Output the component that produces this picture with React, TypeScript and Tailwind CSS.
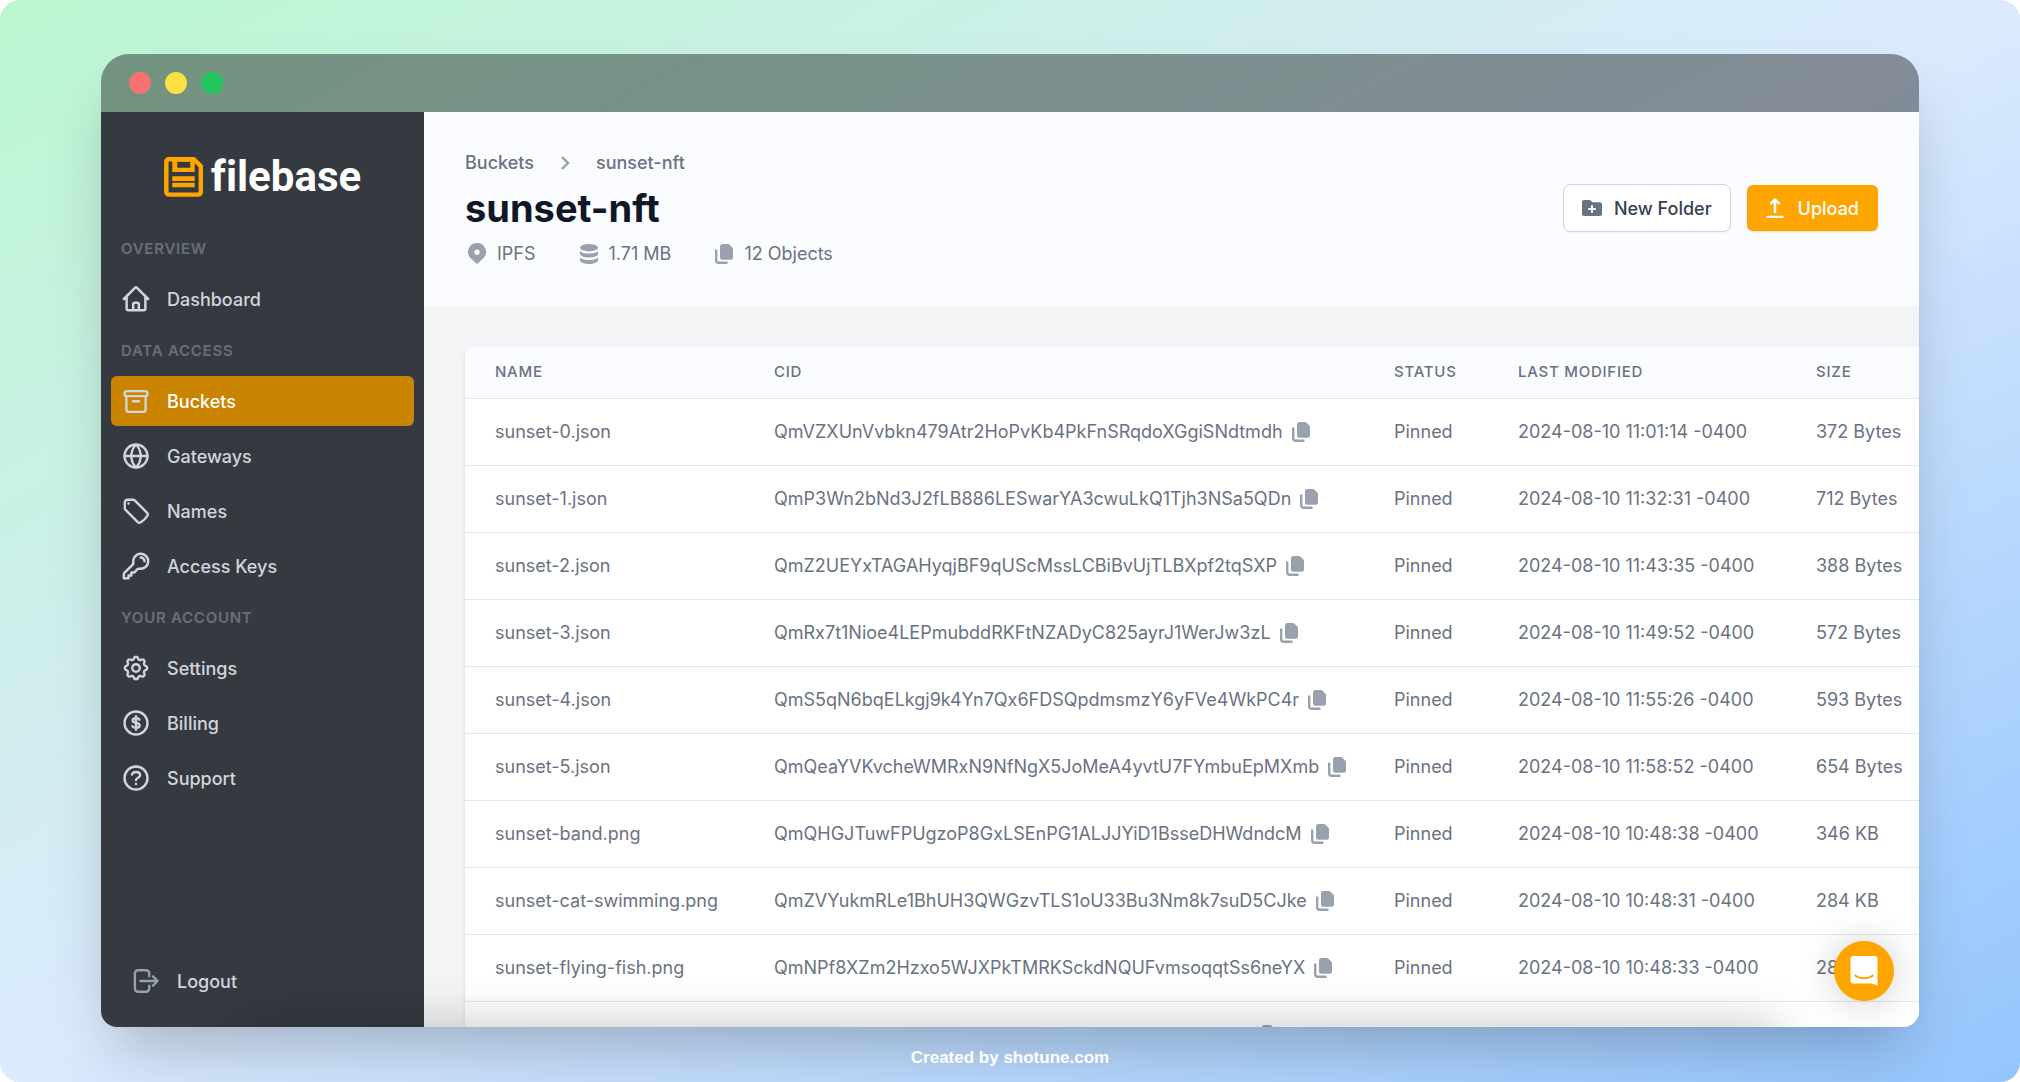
import React from 'react';
import { HiOutlineHome, HiOutlineKey, HiOutlineTag } from 'react-icons/hi2';
import { TbSettings } from 'react-icons/tb';

type IconProps = { className?: string };

const Line: React.FC<IconProps & { children: React.ReactNode }> = ({ className, children }) => (
  <svg
    viewBox="0 0 24 24"
    fill="none"
    stroke="currentColor"
    strokeWidth={1.9}
    strokeLinecap="round"
    strokeLinejoin="round"
    className={className}
    aria-hidden="true"
  >
    {children}
  </svg>
);

const HomeIcon: React.FC<IconProps> = (p) => <HiOutlineHome strokeWidth={2} {...p} />;
const TagIcon: React.FC<IconProps> = (p) => <HiOutlineTag strokeWidth={1.9} {...p} />;
const KeyIcon: React.FC<IconProps> = (p) => <HiOutlineKey strokeWidth={2} {...p} />;
const SettingsIcon: React.FC<IconProps> = (p) => <TbSettings strokeWidth={1.9} {...p} />;

const BucketIcon: React.FC<IconProps> = (p) => (
  <Line {...p}>
    <rect x="2.9" y="4.1" width="18.2" height="4" rx="1.6" />
    <path d="M4.3 8.1v10.4a2.2 2.2 0 0 0 2.2 2.2h11a2.2 2.2 0 0 0 2.2-2.2V8.1M9.6 12.2h4.8" />
  </Line>
);

const GlobeIcon: React.FC<IconProps> = (p) => (
  <Line {...p}>
    <circle cx="12" cy="12" r="9.2" />
    <path d="M2.8 12h18.4M12 2.8c-2.6 2.6-3.7 5.8-3.7 9.2s1.1 6.6 3.7 9.2c2.6-2.6 3.7-5.8 3.7-9.2S14.6 5.4 12 2.8" />
  </Line>
);

const BillingIcon: React.FC<IconProps> = (p) => (
  <Line {...p}>
    <circle cx="12" cy="12" r="9.2" />
    <path d="M12 6.6v10.8M14.7 9.3c-.4-.8-1.4-1.2-2.7-1.2-1.6 0-2.7.7-2.7 1.9 0 2.900 5.600 1.100 5.600 4 0 1.200-1.200 1.900-2.900 1.900-1.500 0-2.500-.5-2.900-1.400" />
  </Line>
);

const SupportIcon: React.FC<IconProps> = (p) => (
  <Line {...p}>
    <circle cx="12" cy="12" r="9.2" />
    <path d="M8.8 9.2c.4-1.3 1.6-2 3.2-2 1.9 0 3.3 1 3.3 2.5 0 2-2.9 2.2-3.3 3.9M12 16.7v.1" />
  </Line>
);

const LogoutIcon: React.FC<IconProps> = (p) => (
  <Line {...p}>
    <path d="M14.600 8.200V6a2.600 2.600 0 0 0-2.600-2.600H5.700A2.600 2.600 0 0 0 3.100 6v12a2.600 2.600 0 0 0 2.600 2.600H12a2.600 2.600 0 0 0 2.600-2.600v-2.200M7.500 12H21M17.600 8.200 21.200 12l-3.600 3.800" />
  </Line>
);

const CopyIcon: React.FC<IconProps> = ({ className }) => (
  <svg viewBox="0 0 18 20" className={className} aria-hidden="true">
    <path d="M7.5 0h5.300q1 0 1.700.7l2.800 2.800q.7.7.7 1.700v8a2.500 2.500 0 0 1-2.500 2.500h-8A2.500 2.500 0 0 1 5 13.200V2.500A2.500 2.500 0 0 1 7.500 0Z" fill="currentColor" />
    <path d="M1.200 5.500v10.800a2.500 2.500 0 0 0 2.500 2.500h8.800" fill="none" stroke="currentColor" strokeWidth="2.4" />
  </svg>
);

const PinIcon: React.FC<IconProps> = ({ className }) => (
  <svg viewBox="0 0 18 21" fill="currentColor" className={className} aria-hidden="true">
    <path fillRule="evenodd" d="M9 0a9 9 0 0 1 6.600 15.100L9 21l-6.600-5.900A9 9 0 0 1 9 0Zm0 6.600a2.600 2.600 0 1 0 0 5.200 2.600 2.600 0 0 0 0-5.200Z" />
  </svg>
);

const DatabaseIcon: React.FC<IconProps> = ({ className }) => (
  <svg viewBox="0 0 18 20" fill="currentColor" className={className} aria-hidden="true">
    <ellipse cx="9" cy="3.7" rx="9" ry="3.7" />
    <path d="M0 7c2 1.8 5.200 2.600 9 2.600S16 8.800 18 7v2.800c0 2.100-4 3.700-9 3.700s-9-1.600-9-3.700Z" />
    <path d="M0 13.400C2 15.200 5.200 16 9 16s7-.8 9-2.600v2.900c0 2.100-4 3.700-9 3.700s-9-1.600-9-3.700Z" />
  </svg>
);

const FolderPlusIcon: React.FC<IconProps> = ({ className }) => (
  <svg viewBox="0 0 20 16" fill="currentColor" className={className} aria-hidden="true">
    <path fillRule="evenodd" d="M2 0h6l2.500 2.200H18a2 2 0 0 1 2 2V14a2 2 0 0 1-2 2H2a2 2 0 0 1-2-2V2a2 2 0 0 1 2-2Zm7 5.200V8H6.200v2H9v2.800h2V10h2.800V8H11V5.200Z" />
  </svg>
);

const UploadIcon: React.FC<IconProps> = ({ className }) => (
  <svg viewBox="0 0 18 20" fill="none" stroke="currentColor" strokeWidth="2.500" className={className} aria-hidden="true">
    <path d="M9 15V2M4.500 6 9 1.600 13.500 6M.5 19h17" />
  </svg>
);

const LogoMark: React.FC<IconProps> = ({ className }) => (
  <svg viewBox="0 0 39 40" className={className} aria-hidden="true">
    <path d="M5 2.200h24.800l7 7V35a2.600 2.600 0 0 1-2.600 2.600H5A2.600 2.600 0 0 1 2.300 35V4.800A2.600 2.600 0 0 1 5 2.200Z" fill="none" stroke="#ffa500" strokeWidth="4.400" />
    <path fillRule="evenodd" fill="#ffa500" d="M8.300 1h22.400v14H8.300Zm5 3.700v6h13v-6ZM8.300 19.300h22.400V24H8.300Zm0 6.400h22.400v4.600H8.300Z" />
  </svg>
);

const NAV = [
  { title: 'Overview', items: [{ label: 'Dashboard', Icon: HomeIcon }] },
  {
    title: 'Data Access',
    items: [
      { label: 'Buckets', Icon: BucketIcon, active: true },
      { label: 'Gateways', Icon: GlobeIcon },
      { label: 'Names', Icon: TagIcon },
      { label: 'Access Keys', Icon: KeyIcon },
    ],
  },
  {
    title: 'Your Account',
    items: [
      { label: 'Settings', Icon: SettingsIcon },
      { label: 'Billing', Icon: BillingIcon },
      { label: 'Support', Icon: SupportIcon },
    ],
  },
];

const FILES = [
  ['sunset-0.json', 'QmVZXUnVvbkn479Atr2HoPvKb4PkFnSRqdoXGgiSNdtmdh', '2024-08-10 11:01:14 -0400', '372 Bytes'],
  ['sunset-1.json', 'QmP3Wn2bNd3J2fLB886LESwarYA3cwuLkQ1Tjh3NSa5QDn', '2024-08-10 11:32:31 -0400', '712 Bytes'],
  ['sunset-2.json', 'QmZ2UEYxTAGAHyqjBF9qUScMssLCBiBvUjTLBXpf2tqSXP', '2024-08-10 11:43:35 -0400', '388 Bytes'],
  ['sunset-3.json', 'QmRx7t1Nioe4LEPmubddRKFtNZADyC825ayrJ1WerJw3zL', '2024-08-10 11:49:52 -0400', '572 Bytes'],
  ['sunset-4.json', 'QmS5qN6bqELkgj9k4Yn7Qx6FDSQpdmsmzY6yFVe4WkPC4r', '2024-08-10 11:55:26 -0400', '593 Bytes'],
  ['sunset-5.json', 'QmQeaYVKvcheWMRxN9NfNgX5JoMeA4yvtU7FYmbuEpMXmb', '2024-08-10 11:58:52 -0400', '654 Bytes'],
  ['sunset-band.png', 'QmQHGJTuwFPUgzoP8GxLSEnPG1ALJJYiD1BsseDHWdndcM', '2024-08-10 10:48:38 -0400', '346 KB'],
  ['sunset-cat-swimming.png', 'QmZVYukmRLe1BhUH3QWGzvTLS1oU33Bu3Nm8k7suD5CJke', '2024-08-10 10:48:31 -0400', '284 KB'],
  ['sunset-flying-fish.png', 'QmNPf8XZm2Hzxo5WJXPkTMRKSckdNQUFvmsoqqtSs6neYX', '2024-08-10 10:48:33 -0400', '283 KB'],
  ['sunset-sea.png', 'QmcrasnuvxzaesrnvacxenzrsvcRuaErnNexezsvacnreux', '2024-08-10 10:48:35 -0400', '291 KB'],
];

const Sidebar: React.FC = () => (
  <aside className="flex w-[323px] shrink-0 flex-col bg-[#353a40] px-[10px] pt-[45px] pb-[21px]">
    <div className="mb-[42px] flex h-10 items-center justify-center gap-2">
      <LogoMark className="h-10 w-[39px]" />
      <span className="font-['Roboto',sans-serif] text-[42px] leading-10 font-bold text-white [font-variant-ligatures:none]">filebase</span>
    </div>
    <nav className="flex flex-col gap-[17px]">
      {NAV.map((group) => (
        <div key={group.title}>
          <h2 className="mb-[15px] pl-[10px] text-[15px] leading-5 font-semibold tracking-wider text-[#696f77] uppercase">{group.title}</h2>
          <div className="flex flex-col gap-[5px]">
            {group.items.map(({ label, Icon, ...rest }) => {
              const active = 'active' in rest;
              return (
                <a
                  key={label}
                  href="#"
                  className={`flex h-[50px] items-center gap-4 rounded-md px-[10px] text-[18px] font-medium ${active ? 'bg-[#ca8400] text-white' : 'text-gray-300'}`}
                >
                  <Icon className="size-[30px] text-gray-300" />
                  {label}
                </a>
              );
            })}
          </div>
        </div>
      ))}
    </nav>
    <a href="#" className="mt-auto flex h-[50px] items-center gap-4 px-5 text-[18px] font-medium text-gray-300">
      <LogoutIcon className="size-[30px] text-gray-400" />
      Logout
    </a>
  </aside>
);

const PageHeader: React.FC = () => (
  <header className="flex h-[194px] shrink-0 items-center justify-between bg-[#fafcff] px-[41px] pb-0.5">
    <div>
      <div className="flex items-center text-[18px] leading-6 font-medium text-gray-500">
        <a href="#">Buckets</a>
        <svg viewBox="0 0 10 14" fill="none" stroke="currentColor" strokeWidth="2.4" className="mx-[26px] h-[14px] w-[10px] text-gray-400" aria-hidden="true">
          <path d="M2 1l6 6-6 6" />
        </svg>
        <a href="#">sunset-nft</a>
      </div>
      <h1 className="mt-[10px] text-[38px] leading-[46px] font-bold text-gray-900">sunset-nft</h1>
      <div className="mt-[11px] flex gap-11 text-[18px] leading-6 text-gray-500">
        <span className="flex items-center gap-[11px] pl-[3px]">
          <PinIcon className="h-[21px] w-[18px] text-gray-400" />
          IPFS
        </span>
        <span className="flex items-center gap-[11px]">
          <DatabaseIcon className="h-5 w-[18px] text-gray-400" />
          1.71 MB
        </span>
        <span className="flex items-center gap-[11px]">
          <CopyIcon className="h-5 w-[18px] text-gray-400" />
          12 Objects
        </span>
      </div>
    </div>
    <div className="flex items-center gap-4">
      <button type="button" className="flex h-12 items-center gap-3 rounded-lg border border-gray-300 bg-white px-[18px] text-[18px] font-medium text-gray-700 shadow-xs">
        <FolderPlusIcon className="h-4 w-5 text-gray-500" />
        New Folder
      </button>
      <button type="button" className="flex h-[46px] items-center gap-[14px] rounded-md bg-[#ffa500] px-[19px] text-[18px] font-medium text-white shadow-sm">
        <UploadIcon className="h-5 w-[18px]" />
        Upload
      </button>
    </div>
  </header>
);

const FilesTable: React.FC = () => (
  <div className="min-h-0 flex-1 overflow-hidden bg-gray-100 pt-[41px] pl-[41px]">
    <div className="overflow-hidden rounded-tl-lg bg-white shadow-md">
      <table className="w-full table-fixed text-left whitespace-nowrap text-gray-500">
        <colgroup>
          <col className="w-[279px]" />
          <col className="w-[620px]" />
          <col className="w-[124px]" />
          <col className="w-[298px]" />
          <col />
        </colgroup>
        <thead className="bg-[#fafcff] text-[15px] tracking-wider uppercase">
          <tr className="h-[51px] border-b border-gray-200">
            {['Name', 'CID', 'Status', 'Last Modified', 'Size'].map((h) => (
              <th key={h} scope="col" className="pl-[30px] font-medium">{h}</th>
            ))}
          </tr>
        </thead>
        <tbody className="text-[18px]">
          {FILES.map(([name, cid, modified, size]) => (
            <tr key={name} className="h-[67px] border-b border-gray-200">
              <td className="pl-[30px]">{name}</td>
              <td className="pl-[30px]">
                <span className="flex items-center gap-[9px]">
                  {cid}
                  <button type="button" aria-label="Copy CID">
                    <CopyIcon className="h-5 w-[18px] text-gray-400" />
                  </button>
                </span>
              </td>
              <td className="pl-[30px]">Pinned</td>
              <td className="pl-[30px]">{modified}</td>
              <td className="pl-[30px]">{size}</td>
            </tr>
          ))}
        </tbody>
      </table>
    </div>
  </div>
);

const App: React.FC = () => {
  return (
    <div className="bg-white font-['Inter',sans-serif]">
      <div className="flex h-screen flex-col overflow-hidden rounded-[20px] bg-linear-to-br/srgb from-[#bbf7d0] via-[#dbeafe] to-[#93c5fd] px-[5%] pt-[54px]">
        <div className="flex min-h-0 flex-1 flex-col rounded-t-[28px] rounded-b-2xl shadow-[0_32px_63px_-15px_rgba(0,0,0,0.25)]">
          <div className="flex h-[58px] shrink-0 items-center gap-[14px] rounded-t-[28px] bg-black/40 px-7">
            <span className="size-[22px] rounded-full bg-[#f87171]" />
            <span className="size-[22px] rounded-full bg-[#fde047]" />
            <span className="size-[22px] rounded-full bg-[#22c55e]" />
          </div>

          <div className="relative flex min-h-0 flex-1 overflow-hidden rounded-b-2xl">
            <Sidebar />
            <main className="flex min-w-0 flex-1 flex-col">
              <PageHeader />
              <FilesTable />
            </main>

            {/* soft shade along the bottom edge */}
            <div className="pointer-events-none absolute inset-x-[140px] top-full h-10 shadow-[0_0_50px_rgba(0,0,0,0.25)]" />

            <button
              type="button"
              aria-label="Open chat"
              className="absolute right-[25px] bottom-[26px] flex size-[60px] items-center justify-center rounded-full bg-[#ffa500] shadow-[0_2px_40px_rgba(0,0,0,0.2)]"
            >
              <svg viewBox="0 0 28 32" className="h-8 w-7" aria-hidden="true">
                <path d="M3.500 1h21a3 3 0 0 1 3 3V31s-3-2.500-7.500-2.500H3.500a3 3 0 0 1-3-3V4a3 3 0 0 1 3-3Z" fill="#fff" />
                <path d="M5 20.500c5 3.800 13 3.800 18 0" fill="none" stroke="#ffa500" strokeWidth="2" strokeLinecap="round" />
              </svg>
            </button>
          </div>
        </div>

        <footer className="flex h-[55px] shrink-0 items-center justify-center pt-[7px] font-['Liberation_Sans',sans-serif] text-[17px] font-bold text-white">
          <span>
            Created by <a href="#">shotune.com</a>
          </span>
        </footer>
      </div>
    </div>
  );
};

export default App;
